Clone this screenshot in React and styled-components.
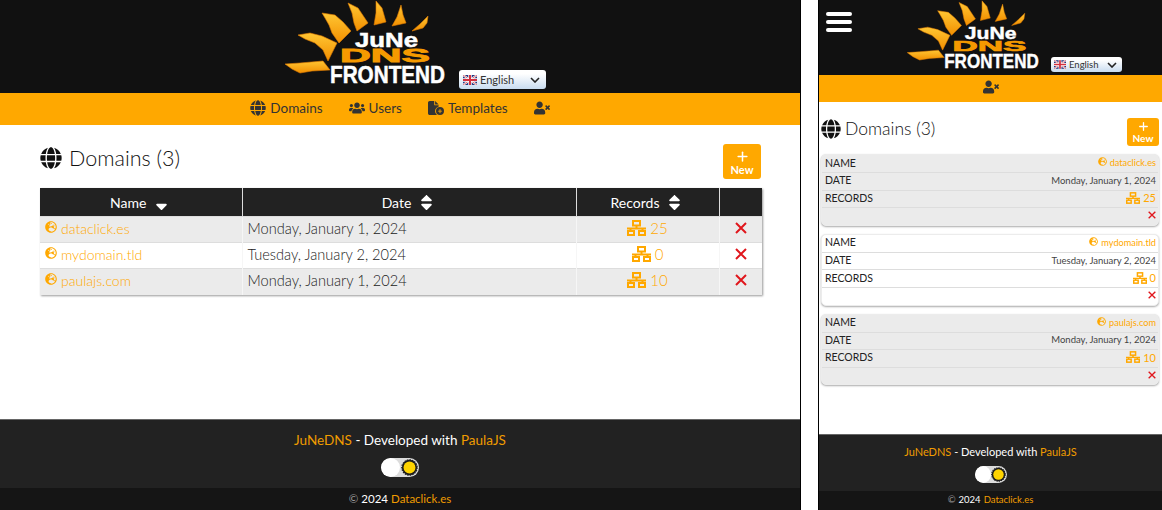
import React from "react";
import styled, { createGlobalStyle } from "styled-components";
import { FaGlobe, FaUsers, FaUserTimes, FaSort, FaSortDown, FaGlobeEurope } from "react-icons/fa";
import { FaFileCirclePlus } from "react-icons/fa6";
import { Plus } from "lucide-react";

const domains = [
  { name: "dataclick.es", date: "Monday, January 1, 2024", records: 25 },
  { name: "mydomain.tld", date: "Tuesday, January 2, 2024", records: 0 },
  { name: "paulajs.com", date: "Monday, January 1, 2024", records: 10 },
];

const GlobalStyle = createGlobalStyle`
  html, body {
    margin: 0;
    padding: 0;
    background: #fff;
    font-family: "Lato", "Liberation Sans", sans-serif;
  }
`;

const Page = styled.div`
  display: flex;
  justify-content: space-between;
  width: 1162px;
  height: 510px;
  overflow: hidden;
`;

const Screen = styled.div`
  display: flex;
  flex-direction: column;
  box-sizing: border-box;
  height: 510px;
  width: ${(p) => (p.$compact ? "344px" : "801px")};
  border-${(p) => (p.$compact ? "left" : "right")}: 1px solid #000;
`;

const Header = styled.header`
  display: flex;
  align-items: flex-start;
  justify-content: ${(p) => (p.$compact ? "flex-start" : "center")};
  box-sizing: border-box;
  height: ${(p) => (p.$compact ? "75px" : "93px")};
  padding-left: ${(p) => (p.$compact ? "7px" : "26px")};
  background: #111;
`;

const Burger = styled.div`
  display: flex;
  flex-direction: column;
  gap: 4px;
  width: 26px;
  margin: 12px 51px 0 0;

  span {
    height: 4px;
    border-radius: 2px;
    background: #fff;
  }
`;

const LogoSvg = styled.svg`
  display: block;
  flex: none;
  width: ${(p) => (p.$compact ? "140px" : "170px")};
  height: ${(p) => (p.$compact ? "74px" : "90px")};
`;

const LangSelect = styled.div`
  display: flex;
  align-items: center;
  box-sizing: border-box;
  flex: none;
  width: ${(p) => (p.$compact ? "71px" : "87px")};
  height: ${(p) => (p.$compact ? "15px" : "19px")};
  margin: ${(p) => (p.$compact ? "57px 0 0 8px" : "70px 0 0 9px")};
  padding: ${(p) => (p.$compact ? "0 5px 0 3px" : "0 6px 0 4px")};
  gap: 3px;
  border-radius: 3px;
  background: linear-gradient(#fff 20%, #c9dcf0);
  color: #333;
  font-size: ${(p) => (p.$compact ? "9.5px" : "11px")};

  svg:last-child {
    margin-left: auto;
  }
`;

const Nav = styled.nav`
  display: flex;
  align-items: center;
  justify-content: center;
  gap: 26px;
  flex: none;
  box-sizing: border-box;
  height: ${(p) => (p.$compact ? "27px" : "32px")};
  padding-bottom: 3px;
  background: #ffa800;
  color: #333;
  font-size: 13.5px;
`;

const NavItem = styled.a`
  display: flex;
  align-items: center;
  gap: 4px;

  svg {
    font-size: 16px;
  }
`;

const Main = styled.main`
  flex: 1;
  min-height: 0;
  padding: ${(p) => (p.$compact ? "16px 3px 0 2px" : "19px 39px 0 40px")};
  background: #fff;
`;

const TitleRow = styled.div`
  display: flex;
  align-items: flex-start;
  justify-content: space-between;
  margin-bottom: ${(p) => (p.$compact ? "8px" : "9px")};
`;

const Title = styled.h1`
  display: flex;
  align-items: center;
  gap: ${(p) => (p.$compact ? "4px" : "7px")};
  margin: ${(p) => (p.$compact ? "0" : "1px 0 0")};
  color: #111;
  font-size: ${(p) => (p.$compact ? "17.5px" : "21.5px")};
  font-weight: 300;
  line-height: ${(p) => (p.$compact ? "22px" : "26px")};

  svg {
    font-size: ${(p) => (p.$compact ? "20px" : "22px")};
  }
`;

const NewButton = styled.button`
  display: flex;
  flex-direction: column;
  align-items: center;
  justify-content: center;
  box-sizing: border-box;
  width: ${(p) => (p.$compact ? "32px" : "38px")};
  height: ${(p) => (p.$compact ? "28px" : "35px")};
  padding: 0;
  border: 0;
  border-radius: 3px;
  background: #ffa800;
  color: #fff;
  font-family: inherit;
  font-size: ${(p) => (p.$compact ? "10px" : "11px")};
  font-weight: 700;
  line-height: 11px;
`;

const Table = styled.table`
  width: 722px;
  border-collapse: collapse;
  table-layout: fixed;
  box-shadow: 1px 1px 2px #999;
`;

const HeadCell = styled.th`
  height: 28px;
  padding: 0;
  background: #222;
  border-right: 1px solid #ddd;
  color: #fff;
  font-size: 14px;
  font-weight: 400;
  text-align: center;

  &:last-child {
    border-right: 0;
  }

  svg {
    margin-left: 6px;
    font-size: 19px;
    vertical-align: -4px;
  }
`;

const Row = styled.tr`
  height: 26px;
  background: ${(p) => (p.$odd ? "#ebebeb" : "#fff")};
  border-top: 1px solid #ddd;
`;

const Cell = styled.td`
  padding: 0 0 2px ${(p) => (p.$center ? "0" : "5px")};
  border-right: 1px solid #f6f6f6;
  color: #222;
  font-size: 14.6px;
  font-weight: 300;
  text-align: ${(p) => (p.$center ? "center" : "left")};

  &:last-child {
    border-right: 0;
  }
`;

const DomainLink = styled.a`
  color: #ffa800;
  font-size: ${(p) => (p.$compact ? "9.2px" : "14px")};
  font-weight: ${(p) => (p.$compact ? 400 : 300)};

  svg {
    margin-right: ${(p) => (p.$compact ? "3px" : "4px")};
    font-size: ${(p) => (p.$compact ? "9px" : "12px")};
    vertical-align: ${(p) => (p.$compact ? "0" : "1px")};
  }
`;

const RecordCount = styled.a`
  display: inline-flex;
  align-items: center;
  gap: ${(p) => (p.$compact ? "3px" : "4px")};
  color: #ffa800;
  font-size: ${(p) => (p.$compact ? "11px" : "15px")};
  font-weight: ${(p) => (p.$compact ? 400 : 300)};
`;

const CardList = styled.div`
  display: flex;
  flex-direction: column;
  gap: 8px;
`;

const Card = styled.div`
  overflow: hidden;
  border: 1px solid #ececec;
  border-radius: 5px;
  background: ${(p) => (p.$odd ? "#ebebeb" : "#fff")};
  box-shadow: 0 1px 2px #aaa;
`;

const CardRow = styled.div`
  display: flex;
  align-items: center;
  justify-content: space-between;
  box-sizing: border-box;
  height: ${(p) => (p.$first ? "17px" : "17.6px")};
  padding: 0 2px 2px 3px;
  border-top: ${(p) => (p.$first ? "0" : "1px solid #ddd")};
  color: #444;
  font-size: 9.5px;
`;

const CardLabel = styled.span`
  color: #222;
  font-size: 10.5px;
`;

const Footer = styled.footer`
  display: flex;
  flex-direction: column;
  align-items: center;
  flex: none;
  box-sizing: border-box;
  height: ${(p) => (p.$compact ? "57px" : "69px")};
  padding-top: ${(p) => (p.$compact ? "9px" : "11px")};
  border-top: 1px solid #666;
  background: #222;
  color: #fff;
  font-size: ${(p) => (p.$compact ? "11px" : "13.5px")};
  line-height: ${(p) => (p.$compact ? "16px" : "18px")};
`;

const Accent = styled.a`
  color: #f09c00;
`;

const Toggle = styled.div`
  display: flex;
  align-items: center;
  justify-content: space-between;
  box-sizing: border-box;
  width: ${(p) => (p.$compact ? "32px" : "38px")};
  height: ${(p) => (p.$compact ? "17px" : "19px")};
  margin-top: ${(p) => (p.$compact ? "6px" : "9px")};
  border-radius: 10px;
  background: #dcdcdc;
  overflow: hidden;
`;

const Knob = styled.span`
  width: ${(p) => (p.$compact ? "17px" : "19px")};
  height: 100%;
  border-radius: 50%;
  background: #fff;
`;

const SunSvg = styled.svg`
  flex: none;
  width: ${(p) => (p.$compact ? "15px" : "17px")};
  height: ${(p) => (p.$compact ? "15px" : "17px")};
  margin-right: 1px;
`;

const Copyright = styled.div`
  display: flex;
  align-items: center;
  justify-content: center;
  gap: 3px;
  flex: none;
  box-sizing: border-box;
  height: ${(p) => (p.$compact ? "19px" : "22px")};
  padding-bottom: 2px;
  background: #151515;
  color: #fff;
  font-size: ${(p) => (p.$compact ? "9.5px" : "11.5px")};
`;

const CopySign = styled.span`
  color: #999;
`;

const rays = [
  "M5 64 L20 63 L43 61 L50 70 L32 71 L20 73 L12 69 Z",
  "M18 35 L30 33 L42 36 L57 43 L48 61 L43 50 L35 43 L25 39 Z",
  "M42 13 L55 15 L63 22 L71 31 L59 43 L52 33 L49 25 L45 18 Z",
  "M68 3 L78 8 L88 23 L77 31 L74 23 L72 13 Z",
  "M96 1 L102 8 L106 22 L94 25 L96 13 Z",
  "M121 5 L123 15 L126 23 L112 26 L117 17 Z",
  "M148 16 L147 23 L143 28 L132 31 L140 24 Z",
];

const Logo = ({ $compact }) => {
  const gradient = $compact ? "rayB" : "rayA";
  return (
    <LogoSvg $compact={$compact} viewBox="0 0 170 90">
      <defs>
        <linearGradient id={gradient} x1="0" y1="0" x2="0" y2="1">
          <stop offset="0" stopColor="#ffc633" />
          <stop offset="1" stopColor="#f28f00" />
        </linearGradient>
      </defs>
      {rays.map((d) => (
        <path key={d} d={d} fill={`url(#${gradient})`} stroke="#e07b00" strokeWidth="0.6" strokeLinejoin="round" />
      ))}
      <g fontFamily="'Liberation Sans', sans-serif" fontWeight="700">
        <text x="75" y="47" fontSize="20" fill="#fff" stroke="#fff" strokeWidth="0.5" textLength="63" lengthAdjust="spacingAndGlyphs">JuNe</text>
        <text x="60" y="62" fontSize="18" fill="#f59a00" stroke="#f59a00" strokeWidth="0.8" textLength="90" lengthAdjust="spacingAndGlyphs">DNS</text>
        <text x="50" y="83" fontSize="23.5" fill="#fff" stroke="#fff" strokeWidth="0.5" textLength="115" lengthAdjust="spacingAndGlyphs">FRONTEND</text>
      </g>
    </LogoSvg>
  );
};

const Flag = ({ $compact }) => (
  <svg width={$compact ? 12 : 14} height={$compact ? 9 : 10} viewBox="0 0 14 10">
    <rect width="14" height="10" fill="#26377f" />
    <path d="M0 0 14 10M14 0 0 10" stroke="#fff" strokeWidth="2" />
    <path d="M0 0 14 10M14 0 0 10" stroke="#d3303f" strokeWidth="0.7" />
    <path d="M7 0V10M0 5H14" stroke="#fff" strokeWidth="3.4" />
    <path d="M7 0V10M0 5H14" stroke="#d3303f" strokeWidth="2" />
  </svg>
);

const Chevron = () => (
  <svg width="10" height="6" viewBox="0 0 10 6">
    <path d="M1 1 5 5 9 1" fill="none" stroke="#222" strokeWidth="1.6" />
  </svg>
);

const Sun = ({ $compact }) => (
  <SunSvg $compact={$compact} viewBox="0 0 16 16">
    <circle cx="8" cy="8" r="7.2" fill="#1a1a1a" strokeDasharray="1.4 1" stroke="#222" strokeWidth="1.2" />
    <circle cx="8" cy="8" r="5.6" fill="#ffd400" />
  </SunSvg>
);

// three outlined boxes on a bus line
const Sitemap = ({ $compact }) => (
  <svg width={$compact ? 14 : 19} height={$compact ? 12 : 16} viewBox="0 0 19 16" fill="none" stroke="#ffa800" strokeWidth="2">
    <rect x="6" y="1" width="7" height="4.5" />
    <path d="M9.5 5.5V8.5M0 8.5H19M3.5 8.5V11M15.5 8.5V11" />
    <rect x="1" y="11" width="6" height="4" />
    <rect x="12" y="11" width="6" height="4" />
  </svg>
);

const Remove = ({ $compact }) => (
  <svg width={$compact ? 8 : 12} height={$compact ? 8 : 12} viewBox="0 0 12 12" stroke="#e0161c" strokeWidth="2">
    <path d="M1 1 11 11M11 1 1 11" />
  </svg>
);

const Shell = ({ $compact, children }) => (
  <Screen $compact={$compact}>
    <Header $compact={$compact}>
      {$compact && (
        <Burger>
          <span />
          <span />
          <span />
        </Burger>
      )}
      <Logo $compact={$compact} />
      <LangSelect $compact={$compact}>
        <Flag $compact={$compact} />
        English
        <Chevron />
      </LangSelect>
    </Header>
    <Nav $compact={$compact}>
      {!$compact && (
        <>
          <NavItem><FaGlobe />Domains</NavItem>
          <NavItem><FaUsers />Users</NavItem>
          <NavItem><FaFileCirclePlus />Templates</NavItem>
        </>
      )}
      <NavItem><FaUserTimes /></NavItem>
    </Nav>
    <Main $compact={$compact}>
      <TitleRow $compact={$compact}>
        <Title $compact={$compact}><FaGlobe />Domains (3)</Title>
        <NewButton $compact={$compact}><Plus size={$compact ? 13 : 15} strokeWidth={2.4} />New</NewButton>
      </TitleRow>
      {children}
    </Main>
    <Footer $compact={$compact}>
      <div>
        <Accent>JuNeDNS</Accent> - Developed with <Accent>PaulaJS</Accent>
      </div>
      <Toggle $compact={$compact}>
        <Knob $compact={$compact} />
        <Sun $compact={$compact} />
      </Toggle>
    </Footer>
    <Copyright $compact={$compact}>
      <CopySign>©</CopySign> 2024 <Accent>Dataclick.es</Accent>
    </Copyright>
  </Screen>
);

const DomainTable = () => (
  <Table>
    <colgroup>
      <col style={{ width: 202 }} />
      <col style={{ width: 334 }} />
      <col style={{ width: 143 }} />
      <col />
    </colgroup>
    <thead>
      <tr>
        <HeadCell>Name<FaSortDown /></HeadCell>
        <HeadCell>Date<FaSort /></HeadCell>
        <HeadCell>Records<FaSort /></HeadCell>
        <HeadCell />
      </tr>
    </thead>
    <tbody>
      {domains.map((d, i) => (
        <Row key={d.name} $odd={i % 2 === 0}>
          <Cell><DomainLink><FaGlobeEurope />{d.name}</DomainLink></Cell>
          <Cell>{d.date}</Cell>
          <Cell $center><RecordCount><Sitemap />{d.records}</RecordCount></Cell>
          <Cell $center><Remove /></Cell>
        </Row>
      ))}
    </tbody>
  </Table>
);

const DomainCards = () => (
  <CardList>
    {domains.map((d, i) => (
      <Card key={d.name} $odd={i % 2 === 0}>
        <CardRow $first>
          <CardLabel>NAME</CardLabel>
          <DomainLink $compact><FaGlobeEurope />{d.name}</DomainLink>
        </CardRow>
        <CardRow>
          <CardLabel>DATE</CardLabel>
          {d.date}
        </CardRow>
        <CardRow>
          <CardLabel>RECORDS</CardLabel>
          <RecordCount $compact><Sitemap $compact />{d.records}</RecordCount>
        </CardRow>
        <CardRow>
          <span />
          <Remove $compact />
        </CardRow>
      </Card>
    ))}
  </CardList>
);

export default function App() {
  return (
    <>
      <GlobalStyle />
      <Page>
        <Shell>
          <DomainTable />
        </Shell>
        <Shell $compact>
          <DomainCards />
        </Shell>
      </Page>
    </>
  );
}
